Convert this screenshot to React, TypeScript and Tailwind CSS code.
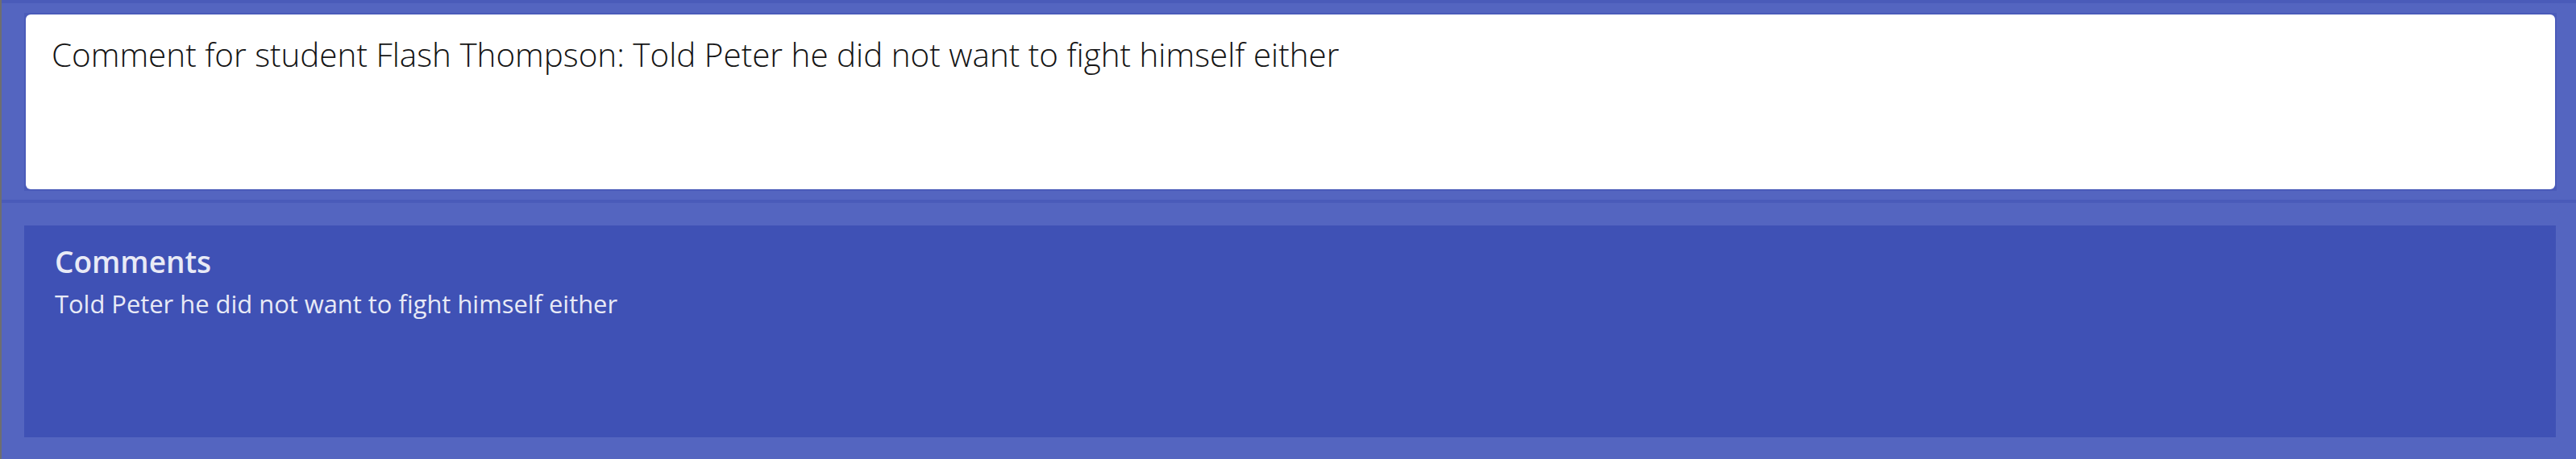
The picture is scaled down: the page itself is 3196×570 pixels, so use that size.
export default function App() {
  const student = "Flash Thompson";
  const comment = "Told Peter he did not want to fight himself either";

  return (
    <div className="flex h-[570px] w-full bg-[#5465c0] font-['Open_Sans',sans-serif]">
      {/* left window edge */}
      <div className="w-[2px] shrink-0 bg-[#6e6e70]" />

      <div className="flex flex-1 flex-col">
        <div className="h-[4px] bg-[#4a5bb9]" />

        {/* Comment input */}
        <div className="pl-[28px] pr-[24px] pt-[12px] pb-[11px]">
          <div className="bg-[#4a5bb9] p-[2px]">
            <div className="h-[217px] rounded-[6px] bg-white px-[32px] pt-[22px]">
              <p className="text-[40.4px] font-light leading-[56px] text-[#141414]">
                Comment for student {student}: {comment}
              </p>
            </div>
          </div>
        </div>

        <div className="h-[4px] bg-[#4a5bb9]" />

        {/* Comments list */}
        <div className="flex flex-1 flex-col pl-[28px] pr-[25px] pt-[28px] pb-[27px]">
          <div className="flex-1 bg-[#3f51b5] px-[38px] pt-[21px] text-[#e8eaf6]">
            <h3 className="text-[37px] font-semibold leading-[48px]">Comments</h3>
            <p className="mt-[8px] text-[30.9px] font-normal leading-[40px]">{comment}</p>
          </div>
        </div>
      </div>
    </div>
  );
}
